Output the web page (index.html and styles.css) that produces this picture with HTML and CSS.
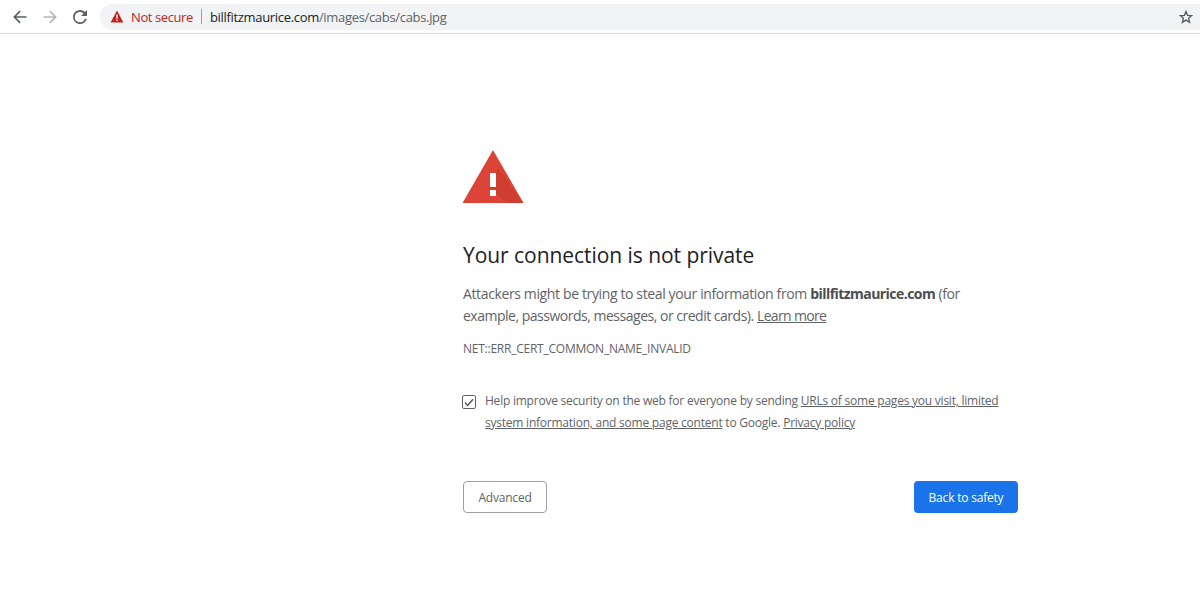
FILE: index.html
```html
<!doctype html>
<html lang="en">
<head>
    <meta charset="UTF-8">
    <title>Privacy error</title>
    <link rel="stylesheet" href="styles.css">
</head>
<body>
    <div class="toolbar">
        <svg class="nav-icon" width="16" height="16" viewBox="0 0 16 16"><path d="M14.5 7.2H4.2l4.5-4.5-1.1-1.1L1.2 8l6.4 6.4 1.1-1.1-4.5-4.5h10.3z" fill="#5a5d61"/></svg>
        <svg class="nav-icon" width="16" height="16" viewBox="0 0 16 16"><path d="M1.5 7.2h10.3L7.3 2.7l1.1-1.1L14.8 8l-6.4 6.4-1.1-1.1 4.5-4.5H1.5z" fill="#b4b6b9"/></svg>
        <svg class="nav-icon" width="16" height="16" viewBox="0 0 16 16"><path d="M13 3A7 7 0 0 0 8 1a7 7 0 1 0 6.8 8.8h-1.9A5.2 5.2 0 1 1 8 2.9c1.4 0 2.7.6 3.6 1.5L9 7h6V1z" fill="#5a5d61"/></svg>
        <div class="omnibox">
            <svg class="warn-small" width="14" height="13" viewBox="0 0 14 13"><path d="M7 0.5 13.4 12.5H0.6z" fill="#c5221f"/><rect x="6.3" y="4.6" width="1.4" height="4" fill="#fff"/><rect x="6.3" y="9.4" width="1.4" height="1.5" fill="#fff"/></svg>
            <span class="not-secure">Not secure</span>
            <span class="sep"></span>
            <span class="url"><b>billfitzmaurice.com</b>/images/cabs/cabs.jpg</span>
            <svg class="star" width="14" height="14" viewBox="0 0 14 14"><path d="M7 1.5 8.6 5.3l4.1.3-3.1 2.7 1 4L7 10.1l-3.6 2.2 1-4L1.3 5.6l4.1-.3z" fill="none" stroke="#55585c" stroke-width="1.3"/></svg>
        </div>
    </div>

    <div class="interstitial">
        <svg class="warn-big" width="62" height="54" viewBox="0 0 62 54">
            <path d="M31 0 61.5 53H0.5z" fill="#db4437"/>
            <path d="M36 18 61.5 53H45L27 37z" fill="#c53929" opacity="0.55"/>
            <rect x="28" y="23" width="6" height="14" fill="#fff"/>
            <rect x="28" y="40" width="6" height="6" fill="#fff"/>
        </svg>
        <h1>Your connection is not private</h1>
        <p class="desc">Attackers might be trying to steal your information from <b>billfitzmaurice.com</b> (for <span class="desc-tail">example, passwords, messages, or credit cards).</span> <a href="#">Learn more</a></p>
        <div class="err-code">NET::ERR_CERT_COMMON_NAME_INVALID</div>
        <div class="opt-in">
            <span class="checkbox">
                <svg width="10" height="9" viewBox="0 0 10 9"><path d="M1 4.6 3.7 7.4 9 1.2" fill="none" stroke="#55585c" stroke-width="1.5"/></svg>
            </span>
            <p>Help improve security on the web for everyone by sending <a href="#">URLs of some pages you visit, limited system information, and some page content</a> to Google. <a href="#">Privacy policy</a></p>
        </div>
        <div class="buttons">
            <button class="btn-advanced">Advanced</button>
            <button class="btn-back">Back to safety</button>
        </div>
    </div>
</body>
</html>
```

FILE: styles.css
```css
*{
    margin: 0;
    padding: 0;
    box-sizing: border-box;
}
html,body{
    width: 100%;
    height: 100%;
    overflow: hidden;
    background: #fff;
    font-family: "Open Sans", "Noto Sans", sans-serif;
}
.toolbar{
    display: flex;
    align-items: center;
    height: 34px;
    padding-left: 12px;
    border-bottom: 1px solid #dadce0;
}
.nav-icon{
    margin-right: 14px;
    flex: none;
}
.omnibox{
    display: flex;
    align-items: center;
    flex: 1;
    height: 26px;
    margin-left: -2px;
    padding: 0 7px 0 10px;
    background: #f1f3f4;
    border-radius: 13px 0 0 13px;
    font-size: 13px;
}
.not-secure{
    margin-left: 7px;
    color: #c5221f;
    letter-spacing: -0.4px;
}
.sep{
    width: 1px;
    height: 15px;
    margin: 0 8px;
    background: #9aa0a6;
}
.url{
    flex: 1;
    color: #5f6368;
    letter-spacing: -0.32px;
}
.url b{
    font-weight: normal;
    color: #202124;
}
.interstitial{
    width: 555px;
    margin: 116px 0 0 463px;
}
.warn-big{
    display: block;
    margin-left: -1px;
}
h1{
    margin-top: 36px;
    font-size: 21px;
    font-weight: normal;
    line-height: 30px;
    color: #202124;
    letter-spacing: -0.05px;
}
.desc{
    margin-top: 13px;
    padding-right: 30px;
    font-size: 14px;
    line-height: 22px;
    color: #5f6368;
    letter-spacing: -0.37px;
}
.desc b{
    color: #4a4d51;
    letter-spacing: -0.55px;
}
.desc-tail{
    letter-spacing: -0.49px;
}
.desc a{
    letter-spacing: -0.65px;
}
a{
    color: #5f6368;
}
.err-code{
    margin-top: 14px;
    font-size: 12px;
    line-height: 16px;
    color: #5f6368;
    letter-spacing: -0.24px;
}
.opt-in{
    display: flex;
    margin-top: 33px;
}
.checkbox{
    display: flex;
    align-items: center;
    justify-content: center;
    flex: none;
    width: 14px;
    height: 14px;
    margin: 5px 9px 0 -1px;
    border: 1px solid #5f6368;
    border-radius: 2px;
}
.opt-in p{
    font-size: 12px;
    line-height: 22px;
    color: #5f6368;
    letter-spacing: -0.23px;
}
.buttons{
    display: flex;
    justify-content: space-between;
    margin-top: 47px;
}
button{
    height: 32px;
    font-family: inherit;
    font-size: 12px;
    border-radius: 4px;
    letter-spacing: -0.2px;
}
.btn-advanced{
    width: 84px;
    background: #fff;
    color: #5f6368;
    border: 1px solid #9aa0a6;
}
.btn-back{
    width: 104px;
    background: #1a73e8;
    color: #fff;
    border: none;
}
```
